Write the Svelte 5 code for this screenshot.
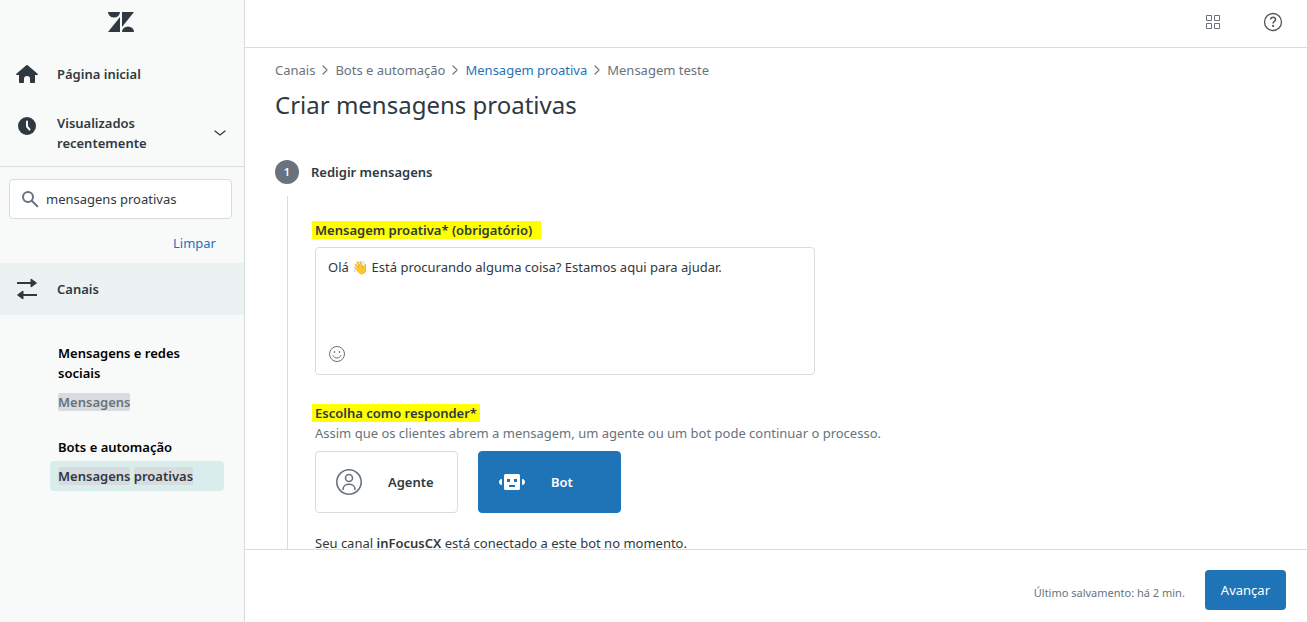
<script>
  let search = $state('mensagens proativas');
  let message = $state('Olá 👋 Está procurando alguma coisa? Estamos aqui para ajudar.');
  let responder = $state('bot');

  const crumbs = [
    { label: 'Canais' },
    { label: 'Bots e automação' },
    { label: 'Mensagem proativa', href: '#proativa' },
    { label: 'Mensagem teste' }
  ];
</script>

<div class="layout">
  <aside class="sidebar">
    <a class="logo" href="#inicio" aria-label="Zendesk">
      <svg width="26" height="20" viewBox="0 0 26 20" fill="currentColor">
        <path d="M0 0h12a6 5.6 0 0 1-12 0z" />
        <path d="M12 5v15H0z" />
        <path d="M14 0h12L14 15z" />
        <path d="M14 20a6 5.6 0 0 1 12 0z" />
      </svg>
    </a>

    <nav class="primary">
      <a class="nav-item" href="#inicio">
        <svg width="22" height="22" viewBox="0 0 22 22" fill="currentColor">
          <path d="M10.3 2.3a1 1 0 0 1 1.4 0l9.9 8.4c.6.5.3 1.3-.4 1.3H19v7.2a.8.8 0 0 1-.8.8h-3.4a.8.8 0 0 1-.8-.8V16a3 3 0 0 0-6 0v3.2a.8.8 0 0 1-.8.8H3.8a.8.8 0 0 1-.8-.8V12H.8c-.7 0-1-.8-.4-1.3z" />
        </svg>
        <span>Página inicial</span>
      </a>
      <button class="nav-item recent" type="button">
        <svg width="22" height="22" viewBox="0 0 22 22">
          <circle cx="11" cy="11" r="9" fill="currentColor" />
          <path d="M11 6.5v5l2.5 3" fill="none" stroke="#f8f9f9" stroke-width="2" stroke-linecap="round" stroke-linejoin="round" />
        </svg>
        <span>Visualizados recentemente</span>
        <svg class="chevron" width="12" height="12" viewBox="0 0 12 12" fill="none" stroke="currentColor" stroke-width="1.2">
          <path d="M1 4l4.6 3.8a.6.6 0 0 0 .8 0L11 4" stroke-linecap="round" />
        </svg>
      </button>
    </nav>

    <div class="search">
      <label class="search-box">
        <svg width="18" height="18" viewBox="0 0 18 18" fill="none" stroke="#68737d" stroke-width="2">
          <circle cx="7" cy="7" r="5" />
          <path d="M10.8 10.8l5.5 5.5" stroke-linecap="round" />
        </svg>
        <input type="text" aria-label="Pesquisar" bind:value={search} />
      </label>
      <button class="clear" type="button" onclick={() => (search = '')}>Limpar</button>
    </div>

    <a class="section" href="#canais">
      <svg width="22" height="22" viewBox="0 0 22 22" fill="currentColor" stroke="currentColor">
        <path d="M1 5h15M6 17h15" stroke-width="2" fill="none" />
        <path d="M15 1v8l5.5-4zM7 13v8l-5.5-4z" stroke-linejoin="round" />
      </svg>
      <span>Canais</span>
    </a>

    <nav class="results">
      <h2>Mensagens e redes sociais</h2>
      <a class="result" href="#mensagens"><mark>Mensagens</mark></a>
      <h2>Bots e automação</h2>
      <a class="result active" href="#proativas"><mark>Mensagens</mark> <mark>proativas</mark></a>
    </nav>
  </aside>

  <div class="main">
    <header class="topbar">
      <button type="button" aria-label="Produtos">
        <svg width="20" height="20" viewBox="0 0 20 20" fill="none" stroke="#68737d">
          <path d="M3.5 3.5h5v5h-5zM11.5 3.5h5v5h-5zM3.5 11.5h5v5h-5zM11.5 11.5h5v5h-5z" />
        </svg>
      </button>
      <button type="button" aria-label="Ajuda">
        <svg width="20" height="20" viewBox="0 0 20 20" fill="none" stroke="#555" stroke-width="1.3">
          <circle cx="10" cy="10" r="8.5" />
          <path d="M7.6 7.6c0-3.2 5-3.1 5-.1 0 1.9-2.5 2-2.5 4.1" stroke-width="1.5" />
          <circle cx="10.1" cy="13.9" r=".5" />
        </svg>
      </button>
    </header>

    <main class="content">
      <nav class="breadcrumb" aria-label="Navegação">
        {#each crumbs as crumb, i}
          {#if i > 0}
            <svg width="12" height="12" viewBox="0 0 12 12" fill="none" stroke="#68737d" stroke-width="1.2">
              <path d="M4 2l3.8 3.6a.6.6 0 0 1 0 .8L4 10" stroke-linecap="round" />
            </svg>
          {/if}
          {#if crumb.href}
            <a href={crumb.href}>{crumb.label}</a>
          {:else}
            <span>{crumb.label}</span>
          {/if}
        {/each}
      </nav>

      <h1>Criar mensagens proativas</h1>

      <section class="step">
        <div class="step-head">
          <span class="step-number">1</span>
          <h3>Redigir mensagens</h3>
        </div>

        <div class="step-body">
          <label class="field-label" for="message"><span class="highlight wide">Mensagem proativa* (obrigatório)</span></label>
          <div class="composer">
            <textarea id="message" bind:value={message}></textarea>
            <button class="emoji" type="button" aria-label="Inserir emoji">
              <svg width="18" height="18" viewBox="0 0 18 18" fill="none" stroke="#68737d">
                <circle cx="9" cy="9" r="7.5" />
                <path d="M5 10.5c1.5 3.5 6.5 3.5 8 0" stroke-linecap="round" />
                <circle cx="6.5" cy="7" r=".5" fill="#68737d" />
                <circle cx="11.5" cy="7" r=".5" fill="#68737d" />
              </svg>
            </button>
          </div>

          <div class="field-label"><span class="highlight" id="responder-label">Escolha como responder*</span></div>
          <p class="hint">Assim que os clientes abrem a mensagem, um agente ou um bot pode continuar o processo.</p>

          <div class="choices" role="group" aria-labelledby="responder-label">
            <button
              type="button"
              class="choice"
              class:selected={responder === 'agent'}
              aria-pressed={responder === 'agent'}
              onclick={() => (responder = 'agent')}>
              <svg width="26" height="26" viewBox="0 0 26 26" fill="none" stroke="currentColor" stroke-width="1.6">
                <circle cx="13" cy="13" r="12.2" />
                <circle cx="13" cy="9" r="3.5" />
                <path d="M7 20.500c0-7 12-7 12 0" stroke-linecap="round" />
              </svg>
              <span>Agente</span>
            </button>
            <button
              type="button"
              class="choice"
              class:selected={responder === 'bot'}
              aria-pressed={responder === 'bot'}
              onclick={() => (responder = 'bot')}>
              <svg width="26" height="26" viewBox="0 0 26 26" fill="currentColor">
                <path fill-rule="evenodd" d="M6.5 5h13A1.500 1.500 0 0 1 21 6.500v13a1.500 1.500 0 0 1-1.500 1.500h-13A1.500 1.500 0 0 1 5 19.500v-13A1.500 1.500 0 0 1 6.500 5zM8 10v3h3v-3zM15 10v3h3v-3zM10 16v2h6v-2z" />
                <path d="M3 10v6c-4 0-4-6 0-6zM23 10v6c4 0 4-6 0-6z" />
              </svg>
              <span>Bot</span>
            </button>
          </div>

          <p class="status">Seu canal <strong>inFocusCX</strong> está conectado a este bot no momento.</p>
        </div>
      </section>
    </main>

    <footer class="footer">
      <span class="saved">Último salvamento: há 2 min.</span>
      <button class="next" type="button">Avançar</button>
    </footer>
  </div>
</div>

<style>
  :global(body) {
    margin: 0;
    color: #2f3941;
    font-family: 'Noto Sans', 'Open Sans', sans-serif;
    font-size: 13px;
    line-height: 20px;
  }

  .layout {
    display: grid;
    grid-template-columns: 245px 1fr;
    height: 100vh;
    background: #fff;
  }

  button,
  input,
  textarea {
    font: inherit;
    color: inherit;
    margin: 0;
    padding: 0;
    border: none;
    background: none;
  }

  button {
    cursor: pointer;
  }

  a {
    color: inherit;
    text-decoration: none;
  }

  h1,
  h2,
  h3,
  p {
    margin: 0;
  }

  svg {
    display: block;
    flex: none;
  }

  .sidebar {
    box-sizing: border-box;
    background: #f8f9f9;
    border-right: 1px solid #d8dcde;
    overflow: hidden;
  }

  .logo {
    display: flex;
    justify-content: center;
    padding: 12px 2px 15px 0;
  }

  .primary {
    border-bottom: 1px solid #d8dcde;
    padding-bottom: 3px;
  }

  .nav-item {
    display: flex;
    align-items: center;
    gap: 19px;
    box-sizing: border-box;
    width: 100%;
    padding: 16px 18px 16px 16px;
    font-weight: 600;
    text-align: left;
  }

  .recent {
    align-items: flex-start;
    padding: 12px 18px 10px 16px;
  }

  .recent svg {
    margin-top: 2px;
  }

  .recent span {
    flex: 1;
  }

  .recent .chevron {
    align-self: center;
    margin: 0;
  }

  .search {
    padding: 12px 12px 10px 9px;
  }

  .search-box {
    display: flex;
    align-items: center;
    gap: 7px;
    box-sizing: border-box;
    height: 40px;
    padding: 0 11px;
    border: 1px solid #d8dcde;
    border-radius: 4px;
    background: #fff;
  }

  .search-box input {
    flex: 1;
    min-width: 0;
    outline: none;
  }

  .clear {
    display: block;
    margin: 14px 16px 0 auto;
    color: #1f73b7;
  }

  .section {
    display: flex;
    align-items: center;
    gap: 19px;
    height: 52px;
    padding: 0 16px;
    background: #ecf2f2;
    font-weight: 600;
  }

  .results {
    padding: 28px 20px 0 50px;
  }

  .results h2 {
    padding: 0 8px;
    color: #000;
    font-size: 13px;
    font-weight: 600;
  }

  .result {
    display: block;
    margin: 4px 0 20px;
    padding: 5px 8px;
    border-radius: 4px;
    color: #68737d;
    font-weight: 600;
  }

  .result.active {
    background: #daeded;
    color: #2f3941;
  }

  mark {
    border-radius: 2px;
    background: #d8dcde;
    color: inherit;
  }

  .main {
    display: grid;
    grid-template-rows: auto 1fr auto;
    min-width: 0;
    min-height: 0;
  }

  .topbar {
    display: flex;
    justify-content: flex-end;
    gap: 40px;
    padding: 12px 24px 15px;
    border-bottom: 1px solid #d8dcde;
  }

  .content {
    min-height: 0;
    padding: 12px 30px 0;
    overflow-y: auto;
    scrollbar-width: none;
  }

  .breadcrumb {
    display: flex;
    align-items: center;
    gap: 4px;
    color: #68737d;
  }

  .breadcrumb a {
    color: #1f73b7;
  }

  h1 {
    margin-top: 9px;
    font-size: 24px;
    font-weight: 400;
    line-height: 32px;
  }

  .step {
    margin-top: 39px;
  }

  .step-head {
    display: flex;
    align-items: center;
    gap: 12px;
  }

  .step-number {
    width: 24px;
    height: 24px;
    border-radius: 50%;
    background: #68737d;
    color: #fff;
    font-size: 11px;
    font-weight: 600;
    line-height: 24px;
    text-align: center;
  }

  h3 {
    font-size: 13px;
    font-weight: 600;
  }

  .step-body {
    margin: 12px 0 0 12px;
    padding: 24px 0 24px 27px;
    border-left: 1px solid #d8dcde;
  }

  .field-label {
    display: block;
    font-weight: 600;
  }

  .highlight {
    display: inline-block;
    margin-left: -3px;
    padding: 0 3px;
    background: #ff0;
    line-height: 18px;
  }

  .highlight.wide {
    padding-right: 9px;
  }

  .composer {
    box-sizing: border-box;
    max-width: 500px;
    margin: 7px 0 28px;
    padding: 9px 12px 11px;
    border: 1px solid #d8dcde;
    border-radius: 4px;
  }

  .composer textarea {
    display: block;
    width: 100%;
    height: 88px;
    resize: none;
    outline: none;
  }

  .emoji {
    display: block;
  }

  .hint {
    color: #68737d;
  }

  .choices {
    display: flex;
    gap: 20px;
    margin: 8px 0 20px;
  }

  .choice {
    display: flex;
    align-items: center;
    gap: 26px;
    box-sizing: border-box;
    width: 143px;
    height: 62px;
    padding: 0 20px;
    border: 1px solid #d8dcde;
    border-radius: 4px;
    font-weight: 600;
  }

  .choice svg {
    color: #68737d;
  }

  .choice.selected {
    border-color: #1f73b7;
    background: #1f73b7;
    color: #fff;
  }

  .choice.selected svg {
    color: #fff;
  }

  .status strong {
    font-weight: 600;
  }

  .footer {
    display: flex;
    align-items: center;
    justify-content: flex-end;
    gap: 20px;
    padding: 20px 21px 12px;
    border-top: 1px solid #d8dcde;
  }

  .saved {
    padding-top: 5px;
    color: #68737d;
    font-size: 11px;
  }

  .next {
    height: 40px;
    padding: 0 16px;
    border-radius: 4px;
    background: #1f73b7;
    color: #fff;
  }
</style>
